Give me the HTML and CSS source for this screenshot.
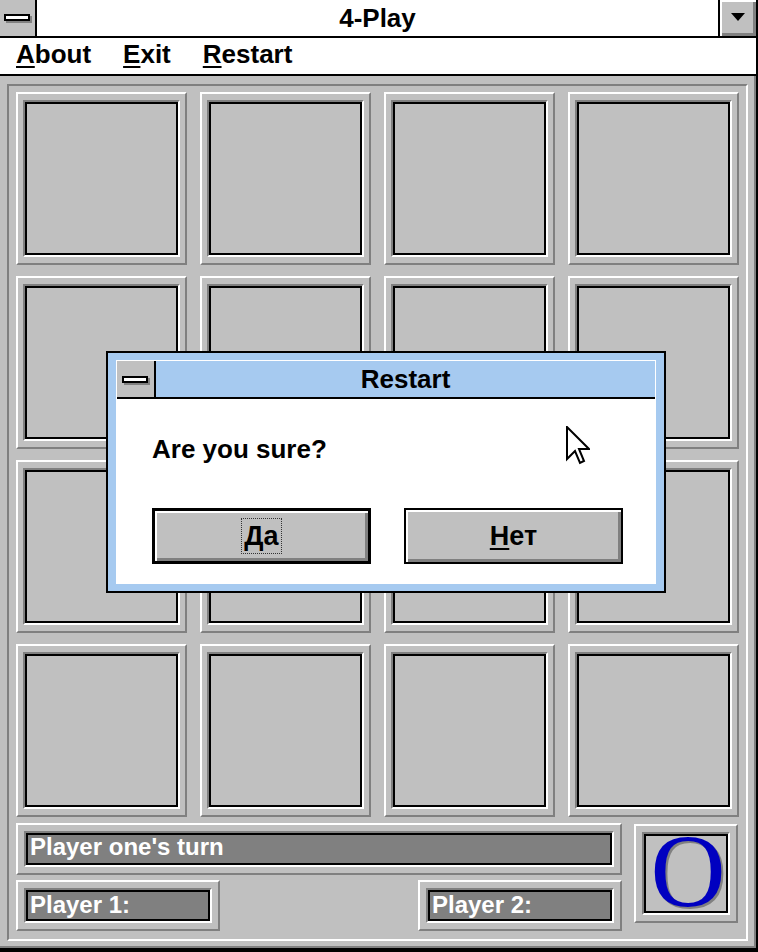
FILE: index.html
```html
<!DOCTYPE html>
<html lang="en">
<head>
    <meta charset="UTF-8">
    <meta name="viewport" content="width=device-width, initial-scale=1.0">
    <title>4-Play</title>
    <link rel="stylesheet" href="styles.css">
</head>
<body>
    <div class="window">
        <div class="titlebar">
            <div class="sysbox"><span class="sysbar"></span></div>
            <div class="title">4-Play</div>
            <div class="minbtn">
                <svg width="14" height="8" viewBox="0 0 14 8"><polygon points="0,0 14,0 7,8" fill="#000"/></svg>
            </div>
        </div>

        <div class="menubar">
            <span class="menu-item"><u>A</u>bout</span>
            <span class="menu-item"><u>E</u>xit</span>
            <span class="menu-item"><u>R</u>estart</span>
        </div>

        <div class="client">
            <div class="panel">
                <div class="board">
                    <div class="cell"><div class="well"><div class="slot"></div></div></div>
                    <div class="cell"><div class="well"><div class="slot"></div></div></div>
                    <div class="cell"><div class="well"><div class="slot"></div></div></div>
                    <div class="cell"><div class="well"><div class="slot"></div></div></div>
                    <div class="cell"><div class="well"><div class="slot"></div></div></div>
                    <div class="cell"><div class="well"><div class="slot"></div></div></div>
                    <div class="cell"><div class="well"><div class="slot"></div></div></div>
                    <div class="cell"><div class="well"><div class="slot"></div></div></div>
                    <div class="cell"><div class="well"><div class="slot"></div></div></div>
                    <div class="cell"><div class="well"><div class="slot"></div></div></div>
                    <div class="cell"><div class="well"><div class="slot"></div></div></div>
                    <div class="cell"><div class="well"><div class="slot"></div></div></div>
                    <div class="cell"><div class="well"><div class="slot"></div></div></div>
                    <div class="cell"><div class="well"><div class="slot"></div></div></div>
                    <div class="cell"><div class="well"><div class="slot"></div></div></div>
                    <div class="cell"><div class="well"><div class="slot"></div></div></div>
                </div>

                <div class="status">
                    <div class="status-left">
                        <div class="raised turn">
                            <div class="well"><div class="field">Player one's turn</div></div>
                        </div>
                        <div class="players">
                            <div class="raised player">
                                <div class="well"><div class="field">Player 1:</div></div>
                            </div>
                            <div class="raised player">
                                <div class="well"><div class="field">Player 2:</div></div>
                            </div>
                        </div>
                    </div>
                    <div class="raised piece">
                        <div class="well"><div class="piece-slot"><span class="piece-o">O</span></div></div>
                    </div>
                </div>
            </div>
        </div>

        <div class="dialog">
            <div class="dialog-inner">
                <div class="dialog-titlebar">
                    <div class="dialog-sys"><span class="sysbar"></span></div>
                    <div class="dialog-title">Restart</div>
                </div>
                <div class="dialog-body">
                    <p class="question">Are you sure?</p>
                    <div class="buttons">
                        <button class="btn btn-default"><span class="focus"><u>Д</u>а</span></button>
                        <button class="btn"><u>Н</u>ет</button>
                    </div>
                </div>
            </div>
        </div>

        <svg class="cursor" width="24" height="40" viewBox="0 0 12 20">
            <path d="M0.5,0.5 V16.5 L4.5,12.5 L7,18.5 L9,17.5 L6.5,11.5 H11.5 Z" fill="#fff" stroke="#000" stroke-width="1"/>
        </svg>
    </div>
</body>
</html>
```

FILE: styles.css
```css
* {
    box-sizing: border-box;
}

body {
    margin: 0;
    background-color: #c0c0c0;
    font-family: "Liberation Sans", Arial, sans-serif;
    font-weight: bold;
    color: #000;
}

u {
    text-decoration-thickness: 2px;
    text-underline-offset: 3px;
}

.window {
    position: relative;
    width: 758px;
    height: 952px;
    border-right: 2px solid #000;
    border-bottom: 4px solid #000;
}

/* title bar */
.titlebar {
    display: flex;
    height: 38px;
    background-color: #fff;
    border-bottom: 2px solid #000;
}

.sysbox {
    width: 37px;
    background-color: #c0c0c0;
    border-right: 2px solid #000;
    display: flex;
    justify-content: center;
    align-items: center;
}

.sysbar {
    display: block;
    width: 26px;
    height: 7px;
    margin: -2px 2px 0 0;
    background-color: #fff;
    border: 2px solid #000;
    box-shadow: 2px 2px 0 #808080;
}

.title {
    flex: 1;
    text-align: center;
    font-size: 26px;
    line-height: 36px;
}

.minbtn {
    width: 38px;
    background-color: #c0c0c0;
    border-left: 2px solid #000;
    box-shadow: inset 2px 2px 0 #fff, inset -3px -3px 0 #808080;
    display: flex;
    justify-content: center;
    align-items: center;
}

.minbtn svg {
    display: block;
    margin-top: -2px;
}

/* menu */
.menubar {
    display: flex;
    gap: 32px;
    height: 38px;
    padding: 0 0 4px 16px;
    background-color: #fff;
    border-bottom: 2px solid #000;
    font-size: 26px;
    line-height: 32px;
}

/* main area */
.client {
    padding: 8px 6px 5px 7px;
    border-right: 2px solid #808080;
    border-bottom: 2px solid #808080;
}

.panel {
    width: 741px;
    padding: 6px 7px 8px 7px;
    border: 2px solid;
    border-color: #808080 #fff #fff #808080;
}

.board {
    display: grid;
    grid-template-columns: repeat(4, 171px);
    grid-template-rows: repeat(4, 173px);
    column-gap: 13px;
    row-gap: 11px;
}

.cell,
.raised {
    border: 2px solid;
    border-color: #fff #808080 #808080 #fff;
    padding: 6px;
}

.cell {
    padding: 6px 5px;
}

.well {
    height: 100%;
    border: 2px solid;
    border-color: #808080 #fff #fff #808080;
}

.slot {
    height: 100%;
    border: 2px solid #000;
}

/* status area */
.status {
    display: flex;
    align-items: flex-start;
    margin-top: 6px;
}

.status-left {
    width: 606px;
}

.turn {
    height: 52px;
}

.players {
    display: flex;
    justify-content: space-between;
    margin-top: 5px;
}

.player {
    width: 204px;
    height: 51px;
}

.field {
    height: 100%;
    padding-left: 2px;
    border: 2px solid #000;
    background-color: #808080;
    color: #fff;
    font-size: 24px;
    line-height: 24px;
    white-space: nowrap;
}

.player .field {
    line-height: 25px;
}

.piece {
    width: 104px;
    height: 99px;
    margin: 1px 0 0 12px;
}

.piece-slot {
    height: 100%;
    padding-left: 4px;
    border: 2px solid #000;
    text-align: center;
    line-height: 69px;
}

.piece-o {
    font-family: "Liberation Serif", "Times New Roman", serif;
    font-weight: normal;
    font-size: 104px;
    color: #0000c0;
    text-shadow: 2px 2px 0 #808080;
}

/* dialog */
.dialog {
    position: absolute;
    left: 106px;
    top: 351px;
    width: 560px;
    padding: 7px 8px;
    border: 2px solid #000;
    background-color: #a6caf0;
}

.dialog-inner {
    border: 1px solid #fff;
}

.dialog-titlebar {
    display: flex;
    height: 38px;
    border-bottom: 2px solid #000;
    background-color: #a6caf0;
}

.dialog-sys {
    width: 39px;
    background-color: #c0c0c0;
    border-right: 2px solid #000;
    display: flex;
    justify-content: center;
    align-items: center;
}

.dialog-sys .sysbar {
    margin: 0 2px 0 0;
}

.dialog-title {
    flex: 1;
    text-align: center;
    font-size: 26px;
    line-height: 36px;
}

.dialog-body {
    height: 184px;
    padding: 35px 0 0 35px;
    background-color: #fff;
}

.question {
    margin: 0;
    font-size: 26px;
    line-height: 30px;
}

.buttons {
    display: flex;
    gap: 33px;
    margin-top: 44px;
}

.btn {
    width: 219px;
    height: 56px;
    padding: 0;
    border: 2px solid #000;
    background-color: #c0c0c0;
    box-shadow: inset 2px 2px 0 #fff, inset -3px -3px 0 #808080;
    font-family: inherit;
    font-weight: bold;
    font-size: 27px;
    color: #000;
}

.btn-default {
    border-width: 3px;
}

.focus {
    display: inline-block;
    padding: 0 2px;
    line-height: 34px;
    border: 1px dotted #333;
}

.cursor {
    position: absolute;
    left: 566px;
    top: 426px;
    display: block;
}
```
